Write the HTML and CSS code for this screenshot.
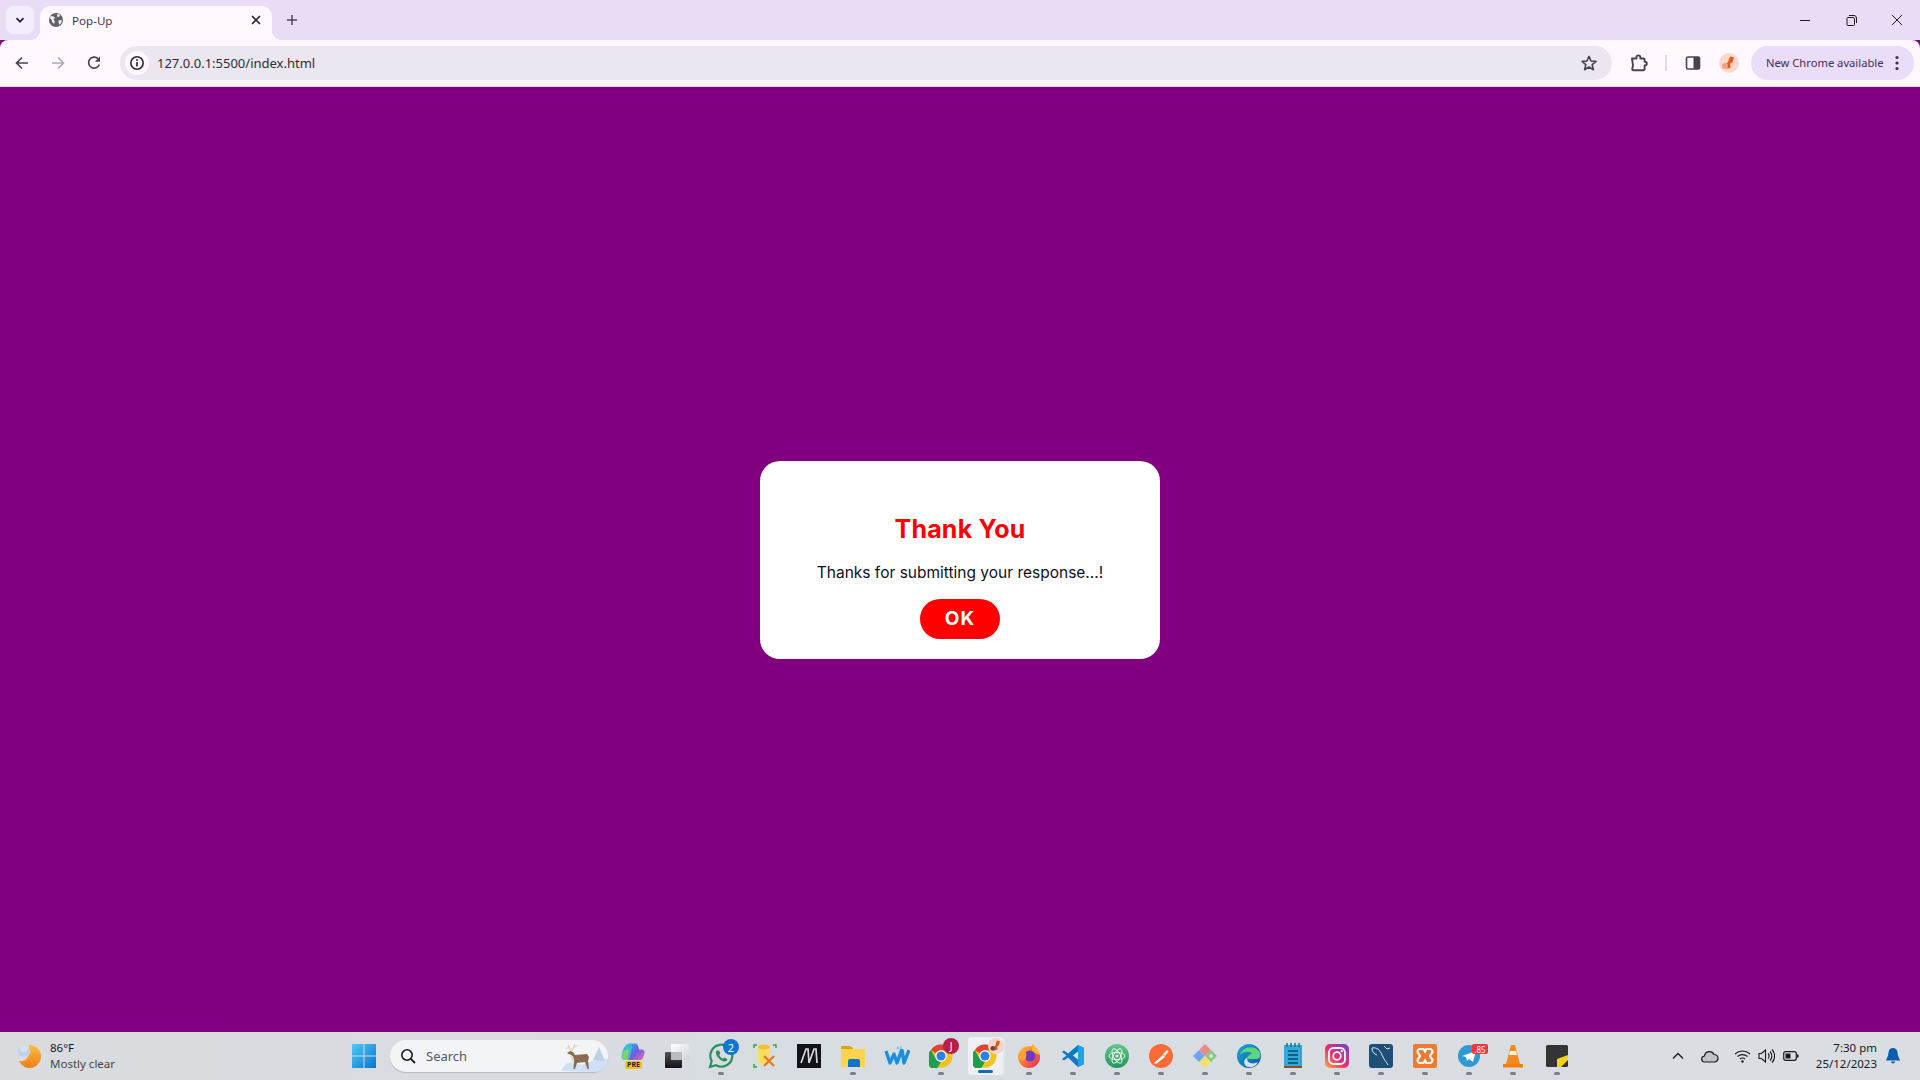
FILE: index.html
```html
<!DOCTYPE html>
<html lang="en">
<head>
<meta charset="utf-8">
<title>Pop-Up</title>
<link rel="stylesheet" href="styles.css">
</head>
<body>
<div class="tabstrip">
  <div class="tab-menu"><svg width="12" height="12" viewBox="0 0 12 12"><path d="M2.500 4.200 6 7.700l3.500-3.500" fill="none" stroke="#2b2438" stroke-width="1.800"/></svg></div>
  <div class="tab">
    <svg class="tab-globe" width="16" height="16" viewBox="0 0 16 16"><circle cx="8" cy="8" r="7" fill="#5f6368"/><path d="M2.500 4 5.500 4.500 7 5.800 5.500 7.500 6.800 9.500 6 12 4.200 10 3.800 8 2 6.500zM9.500 1.800 12 3 11 5 9 4.500zM10.500 8.500l3.300-.5-.6 3-1.700 1.800-.8-1.800z" fill="#f6f1f8"/></svg>
    <span class="tab-title">Pop-Up</span>
    <svg class="tab-close" width="10" height="10" viewBox="0 0 10 10"><path d="M1 1l8 8M9 1 1 9" stroke="#2d2a33" stroke-width="1.700"/></svg>
  </div>
  <svg class="new-tab" width="12" height="12" viewBox="0 0 12 12"><path d="M6 1v10M1 6h10" stroke="#4d4858" stroke-width="1.500"/></svg>
  <div class="win-controls">
    <svg width="46" height="12" viewBox="0 0 46 12"><path d="M18 6.500h10" stroke="#1c1c1c" stroke-width="1"/></svg>
    <svg width="46" height="12" viewBox="0 0 46 12"><path d="M19.500 3.500h5.500a1.500 1.500 0 0 1 1.500 1.500v5.500a1 1 0 0 1-1 1h-5.500a1 1 0 0 1-1-1v-6a1 1 0 0 1 .5-1zM21 1.500h5a2.500 2.500 0 0 1 2.500 2.500v5" fill="none" stroke="#1c1c1c" stroke-width="1"/></svg>
    <svg width="46" height="12" viewBox="0 0 46 12"><path d="M18 1l10 10M28 1 18 11" stroke="#1c1c1c" stroke-width="1"/></svg>
  </div>
</div>

<div class="toolbar">
  <div class="nav-btn"><svg width="16" height="16" viewBox="0 0 16 16"><path d="M14 8H3M8 2.500 2.500 8 8 13.500" fill="none" stroke="#47434f" stroke-width="1.700"/></svg></div>
  <div class="nav-btn"><svg width="16" height="16" viewBox="0 0 16 16"><path d="M2 8h11M8 2.500 13.500 8 8 13.500" fill="none" stroke="#aeaab4" stroke-width="1.700"/></svg></div>
  <div class="nav-btn"><svg width="16" height="16" viewBox="0 0 16 16"><path d="M13.300 9.500A5.500 5.500 0 1 1 12 3.700" fill="none" stroke="#47434f" stroke-width="1.700"/><path d="M14 1.500v5.200H8.800z" fill="#47434f"/></svg></div>
  <div class="omnibox">
    <div class="info-chip"><svg width="16" height="16" viewBox="0 0 16 16"><circle cx="8" cy="8" r="6.200" fill="none" stroke="#2b2833" stroke-width="1.600"/><path d="M8 7v4.500" stroke="#2b2833" stroke-width="1.700"/><circle cx="8" cy="4.900" r="1" fill="#2b2833"/></svg></div>
    <span class="url">127.0.0.1:5500/index.html</span>
    <svg class="star" width="18" height="18" viewBox="0 0 18 18"><path d="M9 2.300l2 4.700 5 .4-3.800 3.300 1.200 5L9 13l-4.400 2.700 1.200-5L2 7.400 7 7z" fill="none" stroke="#47434f" stroke-width="1.600" stroke-linejoin="round"/></svg>
  </div>
  <svg class="ext-icon" width="18" height="18" viewBox="0 0 18 18"><path d="M2 4.500H6.500V3.300a1.900 1.900 0 0 1 3.800 0V4.500h3.300a1 1 0 0 1 1 1v2.200h.3a1.900 1.900 0 0 1 0 3.800h-.3v3.700a1 1 0 0 1-1 1H3.200a1 1 0 0 1-1-1l.8-3.800z" fill="none" stroke="#47434f" stroke-width="1.900" stroke-linejoin="round"/></svg>
  <div class="tool-sep"></div>
  <svg class="panel-icon" width="16" height="16" viewBox="0 0 16 16"><rect x="1.500" y="2" width="13" height="12" rx="1.500" fill="none" stroke="#47434f" stroke-width="1.600"/><rect x="8.500" y="2" width="6" height="12" fill="#47434f"/></svg>
  <svg class="avatar" width="20" height="20" viewBox="0 0 20 20"><circle cx="10" cy="10" r="10" fill="#fbd9cf"/><path d="M11 3.500l4 1-1.500 5-2.500 1 .5 4.500-4 .5-2-3 3.500-3.500z" fill="#e25d1c"/><circle cx="6" cy="13" r="3" fill="#efa184"/></svg>
  <div class="update-pill">
    <span class="pill-text">New Chrome available</span>
    <svg width="4" height="16" viewBox="0 0 4 16"><circle cx="2" cy="2.500" r="1.600" fill="#3a2e55"/><circle cx="2" cy="8" r="1.600" fill="#3a2e55"/><circle cx="2" cy="13.500" r="1.600" fill="#3a2e55"/></svg>
  </div>
</div>

<main class="page">
  <section class="popup">
    <h2 class="popup-title">Thank You</h2>
    <p class="popup-text">Thanks for submitting your response...!</p>
    <button class="popup-btn">OK</button>
  </section>
</main>

<footer class="taskbar">
  <div class="weather">
    <svg width="26" height="26" viewBox="0 0 26 26"><defs><linearGradient id="moon" x1="0" y1="0" x2="0" y2="1"><stop offset="0" stop-color="#f9c13a"/><stop offset="1" stop-color="#ee7d1d"/></linearGradient></defs><path d="M13 2a11.500 11.500 0 1 1-10 16c5 1.500 12-2 10-16z" fill="url(#moon)"/><ellipse cx="8" cy="9" rx="6.500" ry="4.500" fill="#bcd3ea"/><ellipse cx="8" cy="6" rx="3.500" ry="3" fill="#d5e2ef"/></svg>
    <div class="weather-text"><span class="w1">86°F</span><span class="w2">Mostly clear</span></div>
  </div>
  <div class="apps">
    <div class="app start"><svg width="24" height="24" viewBox="0 0 24 24"><defs><linearGradient id="win" x1="0" y1="0" x2="1" y2="1"><stop offset="0" stop-color="#4fcbf7"/><stop offset="1" stop-color="#0a74cf"/></linearGradient></defs><path d="M0 0h11.500v11.500H0zM12.500 0H24v11.500H12.500zM0 12.500h11.500V24H0zM12.500 12.500H24V24H12.500z" fill="url(#win)"/></svg></div>
    <div class="search">
      <svg width="16" height="16" viewBox="0 0 16 16"><circle cx="7" cy="7" r="5.200" fill="none" stroke="#1b1b1b" stroke-width="1.600"/><path d="M10.800 10.800 15 15" stroke="#1b1b1b" stroke-width="1.800"/></svg>
      <span>Search</span>
      <svg class="deer" width="46" height="32" viewBox="0 0 46 32"><path d="M0 31c3-7 8-10 12-8s10 2 14 0 14-5 20-4v6c-3 4-8 7-14 7z" fill="#cfdff4"/><path d="M32 20l6-13 6 14z" fill="#bcd0e8"/><path d="M6 13l3-2 3 1 2 3 12-1 2 3-1 4 1 8h-1.500l-2.500-7-8 1-2 6h-1.500l.500-9-2.500-5-3-1z" fill="#8a6c4e"/><path d="M9 16l3 7 1.500-2-1.500-5z" fill="#e6dccb"/><path d="M10 11 7 5M11 11l3-7M8 8l-3 0M13 7l3-1" stroke="#d9cfc0" stroke-width="1.200" fill="none"/></svg>
    </div>
    <div class="app"><svg class="copilot" width="24" height="17" viewBox="0 0 24 17"><defs><linearGradient id="cop" x1="0" y1="0" x2="1" y2="1"><stop offset="0" stop-color="#2fb4ea"/><stop offset=".5" stop-color="#6a5fe0"/><stop offset="1" stop-color="#ef6fa5"/></linearGradient></defs><path d="M8 .500h6c2 0 3 1.500 3.500 4l.500 2h3c2 0 3 2 2.500 4L22 15c-.5 1.500-1.500 2-3 2H7z" fill="url(#cop)"/><path d="M8 .500C5 1 3 4 1.500 8.500-.5 14 1 17 4 17h4l3-12C11.500 2 10 .500 8 .500z" fill="#3abfd6"/><path d="M1 12c1-4 4-6 7-5l-2 10H4c-2 0-3-2-3-5z" fill="#7ed36b"/></svg><span class="pre-tag">PRE</span></div>
    <div class="app"><svg width="26" height="26" viewBox="0 0 26 26"><defs><linearGradient id="tvw" x1="0" y1="0" x2="1" y2="1"><stop offset="0" stop-color="#fff"/><stop offset="1" stop-color="#cfd2d6"/></linearGradient><linearGradient id="tvd" x1="0" y1="0" x2="0" y2="1"><stop offset="0" stop-color="#555"/><stop offset="1" stop-color="#111"/></linearGradient></defs><rect x="1" y="9" width="17" height="16" rx="1" fill="url(#tvd)"/><rect x="7" y="1" width="18" height="16" rx="1" fill="url(#tvw)"/><rect x="7" y="9" width="11" height="8" fill="#b9bcbf"/></svg></div>
    <div class="app"><svg width="26" height="26" viewBox="0 0 26 26"><path d="M2 24l1.700-6A11 11 0 1 1 8 22.300z" fill="none" stroke="#23935c" stroke-width="2.200"/><path d="M9 7.500c-1.500 1-1.500 3 0 5.500s5 5.500 7.500 5.500c2 0 3-1.500 2.800-2.500l-3-1.500-1.300 1.300c-2-1-3-2-3.800-4l1.200-1.200L11 7.500z" fill="#23935c"/></svg><span class="dot"></span><span class="badge badge-blue">2</span></div>
    <div class="app"><svg width="24" height="26" viewBox="0 0 24 26"><path d="M1 5V2h3M20 2h3v3M1 21v3h3" fill="none" stroke="#37a447" stroke-width="1.500"/><rect x="5" y="2" width="12" height="19" rx="4" fill="#f7dd63"/><ellipse cx="11" cy="4" rx="6" ry="2.500" fill="#f2c22c"/><path d="M11 13l10 10M21 13 11 23" stroke="#e5792a" stroke-width="2.400"/></svg></div>
    <div class="app"><svg width="24" height="24" viewBox="0 0 24 24"><rect width="24" height="24" fill="#12121a"/><path d="M4 19 9 5h2l1 14M12 19 17 5h2l1 14" fill="none" stroke="#d8d8d8" stroke-width="1.700"/></svg></div>
    <div class="app"><svg width="26" height="24" viewBox="0 0 26 24"><path d="M1 3a1 1 0 0 1 1-1h8l3 2v4H1z" fill="#d8a21b"/><path d="M1 5h24v18H1z" fill="#fcd44f"/><path d="M10 15h8a2 2 0 0 1 2 2v6H8v-6a2 2 0 0 1 2-2z" fill="#1274c4"/></svg><span class="dot"></span></div>
    <div class="app"><svg width="26" height="22" viewBox="0 0 26 22"><path d="M2 6l4 12 4-9 3 9 5-14M18 5l2 13 5-13" fill="none" stroke="#1c8fe0" stroke-width="3.400" stroke-linejoin="round"/><circle cx="14" cy="3" r="1.500" fill="#6fd0f4"/><circle cx="17" cy="2" r="1" fill="#6fd0f4"/></svg></div>
    <div class="app"><svg width="24" height="24" viewBox="0 0 26 26"><use href="#chrome-logo"/></svg><span class="dot"></span><span class="badge badge-j">J</span></div>
    <div class="app active"><svg width="24" height="24" viewBox="0 0 26 26"><use href="#chrome-logo"/></svg><span class="active-line"></span><svg class="avatar-badge" width="16" height="16" viewBox="0 0 20 20"><circle cx="10" cy="10" r="10" fill="#f6d5c9"/><path d="M11 3l4 1.500-1.500 5-2 1 .5 4-4 1-2-3 3.500-3.500z" fill="#df5a1a"/><circle cx="6" cy="13" r="3" fill="#6b4a3a"/></svg></div>
    <div class="app"><svg width="24" height="24" viewBox="0 0 24 24"><defs><linearGradient id="ff" x1="0" y1="0" x2="1" y2="1"><stop offset="0" stop-color="#ffcf3a"/><stop offset=".5" stop-color="#ff7139"/><stop offset="1" stop-color="#e3245f"/></linearGradient></defs><circle cx="12" cy="13" r="11" fill="url(#ff)"/><path d="M15 0c3 2 7 6 8 11l-8-3z" fill="#ffb52e"/><circle cx="13" cy="12" r="5.500" fill="#6a3bc4"/><path d="M1 12c1-4 5-5 8-3 1 3 0 6-2 8-3 0-5-2-6-5z" fill="#ffa12e"/></svg><span class="dot"></span></div>
    <div class="app"><svg width="24" height="24" viewBox="0 0 24 24"><path d="M17 1l6 3v16l-6 3L7 13.500l-4 3L1 15l4.500-3.500L1 8l2-1.500 4 3z" fill="#0e78c4"/><path d="M17 1l6 3v16l-6 3V15.500l-5-4 5-4z" fill="#21a1ec"/><path d="M17 7.500v8l-5-4z" fill="#dde1e5"/></svg><span class="dot"></span></div>
    <div class="app"><svg width="24" height="24" viewBox="0 0 24 24"><defs><linearGradient id="atom" x1="0" y1="0" x2="0" y2="1"><stop offset="0" stop-color="#67c48a"/><stop offset="1" stop-color="#1f9856"/></linearGradient></defs><circle cx="12" cy="12" r="12" fill="url(#atom)"/><g fill="none" stroke="#e8f6ed" stroke-width="1"><ellipse cx="12" cy="12" rx="8" ry="3.500"/><ellipse cx="12" cy="12" rx="8" ry="3.500" transform="rotate(60 12 12)"/><ellipse cx="12" cy="12" rx="8" ry="3.500" transform="rotate(120 12 12)"/></g><circle cx="12" cy="12" r="1.500" fill="#e8f6ed"/></svg><span class="dot"></span></div>
    <div class="app"><svg width="24" height="24" viewBox="0 0 24 24"><circle cx="12" cy="12" r="12" fill="#fb6b35"/><path d="M5 19l9-8 2 2-9 7zM14 10l4-4 1.500 1.500L16 12z" fill="#fff"/></svg><span class="dot"></span></div>
    <div class="app"><svg width="24" height="24" viewBox="0 0 24 24"><path d="M6 6l6 6-6 6-6-6z" fill="#6ea6f7"/><path d="M9.500 2.500 12 0l6 6-6 6-6-6z" fill="#e98a8a"/><path d="M18 6l6 6-6 6-6-6z" fill="#85c97a"/><path d="M12 12l6 6-6 6-6-6z" fill="#f6dd6d"/><circle cx="18" cy="12" r="2" fill="#d8dde2"/></svg><span class="dot"></span></div>
    <div class="app"><svg width="24" height="24" viewBox="0 0 24 24"><defs><linearGradient id="edge" x1="0" y1="0" x2="1" y2="1"><stop offset="0" stop-color="#1ba7d8"/><stop offset="1" stop-color="#0c59a4"/></linearGradient></defs><circle cx="12" cy="12" r="12" fill="url(#edge)"/><path d="M3 11C5 3 17 0 22.500 8c2 4 .5 7-3.500 7H10c0-3 3-5 5-5-2-3-9-3-12 1z" fill="#5fd57e"/><path d="M10 14c0 5 5 7 11 4-3 6-9 6-12 4-3-3-2-7 1-8z" fill="#d7e3ec"/></svg><span class="dot"></span></div>
    <div class="app"><svg width="20" height="26" viewBox="0 0 20 26"><rect x="1" y="2" width="18" height="21" fill="#2fa9d8"/><rect x="1" y="23" width="18" height="2" fill="#8a4f1e"/><path d="M4 0v4M8 0v4M12 0v4M16 0v4" stroke="#1b6f95" stroke-width="1.500"/><path d="M5 8h10M5 12h10M5 16h10M5 20h10" stroke="#0f5f8a" stroke-width="1.800"/></svg><span class="dot"></span></div>
    <div class="app"><svg width="24" height="24" viewBox="0 0 24 24"><defs><linearGradient id="ig" x1="0" y1="1" x2="1" y2="0"><stop offset="0" stop-color="#fcb03b"/><stop offset=".45" stop-color="#e8306e"/><stop offset="1" stop-color="#6a45d0"/></linearGradient></defs><rect width="24" height="24" rx="5" fill="url(#ig)"/><rect x="4" y="4" width="16" height="16" rx="4.500" fill="none" stroke="#fff" stroke-width="1.800"/><circle cx="12" cy="12" r="3.800" fill="none" stroke="#fff" stroke-width="1.800"/><circle cx="16.800" cy="7.200" r="1.100" fill="#fff"/></svg><span class="dot"></span></div>
    <div class="app"><svg width="24" height="24" viewBox="0 0 24 24"><rect width="24" height="24" rx="3" fill="#1e4f78"/><path d="M3 4c5-1 8 2 10 7s4 6 6 10M3 4c0 4 2 6 5 7M15 2l3 3M18 5l3-1" fill="none" stroke="#dfe9f2" stroke-width="1"/></svg><span class="dot"></span></div>
    <div class="app"><svg width="24" height="24" viewBox="0 0 24 24"><rect width="24" height="24" rx="2" fill="#f07a2c"/><path d="M7 5h3.500L12 7.500 13.500 5H17a2.500 2.500 0 0 1 2 4l-2 3 2 3a2.500 2.500 0 0 1-2 4h-3.500L12 16.500 10.500 19H7a2.500 2.500 0 0 1-2-4l2-3-2-3a2.500 2.500 0 0 1 2-4z" fill="none" stroke="#fff" stroke-width="2.200"/></svg><span class="dot"></span></div>
    <div class="app"><svg width="22" height="22" viewBox="0 0 22 22"><circle cx="11" cy="11" r="11" fill="#2b9ad7"/><path d="M4 11l14-5-3 11-4-3-2 2-1-4z" fill="#fff"/></svg><span class="dot"></span><span class="badge badge-red">.85</span></div>
    <div class="app"><svg width="20" height="24" viewBox="0 0 20 24"><path d="M8 1h4l5 19H3z" fill="#f58a1c"/><path d="M7 7h6l1 4H6z" fill="#f4f0ea"/><path d="M0 20h20v3.500H0z" fill="#ef8212"/></svg><span class="dot"></span></div>
    <div class="app"><svg width="22" height="22" viewBox="0 0 22 22"><rect width="22" height="22" rx="1.500" fill="#343434"/><path d="M11 14 22 10v5l-7 7h-4z" fill="#f7d216"/></svg><span class="dot"></span></div>
  </div>
  <div class="tray">
    <svg class="t-chev" width="12" height="8" viewBox="0 0 12 8"><path d="M1 6.500l5-5 5 5" fill="none" stroke="#1a1a1a" stroke-width="1.300"/></svg>
    <svg class="t-cloud" width="18" height="14" viewBox="0 0 18 14"><path d="M4 13a3 3 0 0 1-.5-6A5 5 0 0 1 13 5.500 3.800 3.800 0 0 1 14 13z" fill="#bfc3c7" stroke="#1a1a1a" stroke-width="1.200"/></svg>
    <svg class="t-wifi" width="17" height="14" viewBox="0 0 17 14"><path d="M1 5a11 11 0 0 1 15 0M3.500 7.500a7.500 7.500 0 0 1 10 0M6 10a3.500 3.500 0 0 1 5 0" fill="none" stroke="#1a1a1a" stroke-width="1.100"/><circle cx="8.500" cy="12.500" r="1.200" fill="#1a1a1a"/></svg>
    <svg class="t-vol" width="17" height="16" viewBox="0 0 17 16"><path d="M1 5.500h2.500L7.500 2v12l-4-3.500H1z" fill="none" stroke="#1a1a1a" stroke-width="1.100"/><path d="M10 5.500a3.500 3.500 0 0 1 0 5M12 3.500a6.500 6.500 0 0 1 0 9M14 1.500a9.500 9.500 0 0 1 0 13" fill="none" stroke="#1a1a1a" stroke-width="1.100"/></svg>
    <svg class="t-bat" width="16" height="10" viewBox="0 0 16 10"><rect x=".7" y=".7" width="12.600" height="8.600" rx="2" fill="none" stroke="#1a1a1a" stroke-width="1.200"/><rect x="2.500" y="2.500" width="5" height="5" fill="#1a1a1a"/><rect x="14" y="3.500" width="1.500" height="3" fill="#1a1a1a"/></svg>
    <div class="clock"><span>7:30 pm</span><span>25/12/2023</span></div>
    <svg class="t-bell" width="14" height="16" viewBox="0 0 14 16"><path d="M7 0a4.500 4.500 0 0 1 4.500 4.500c0 4 2.500 6.500 2.500 8H0c0-1.500 2.500-4 2.500-8A4.500 4.500 0 0 1 7 0zM5 13.500h4a2 2 0 0 1-4 0z" fill="#0b5cad"/></svg>
  </div>
  <svg class="defs" width="0" height="0"><defs><symbol id="chrome-logo" viewBox="0 0 26 26"><circle cx="13" cy="13" r="12.500" fill="#f4c21f"/><path d="M13 .500A12.500 12.500 0 0 1 23.800 6.700H13a6.300 6.300 0 0 0-5.500 3.200L2.100 6.800A12.500 12.500 0 0 1 13 .500z" fill="#dc4437"/><path d="M2.100 6.800l5.400 9.400a6.300 6.300 0 0 0 5.500 3.100l-5.400 9.300-.4-.3A12.500 12.500 0 0 1 2.100 6.800z" fill="#1e9e4e"/><circle cx="13" cy="13" r="6.200" fill="#fff"/><circle cx="13" cy="13" r="4.900" fill="#2c7fec"/></symbol></defs></svg>
</footer>
</body>
</html>
```
FILE: styles.css
```css
* { box-sizing: border-box; }
html, body { margin: 0; height: 100%; }
body {
  display: flex;
  flex-direction: column;
  height: 1080px;
  overflow: hidden;
  font-family: "Noto Sans", "Open Sans", sans-serif;
  background: #800080;
}
svg { display: block; flex: none; }

/* Tab strip */
.tabstrip {
  flex: none;
  height: 40px;
  background: #e9ddf6;
  display: flex;
  align-items: flex-start;
  padding: 6px 0 0 6px;
}
.tab-menu {
  width: 28px;
  height: 28px;
  border-radius: 8px;
  background: #f4edfb;
  display: flex;
  align-items: center;
  justify-content: center;
}
.tab {
  position: relative;
  width: 232px;
  height: 34px;
  margin-left: 6px;
  background: #fff8ff;
  border-radius: 10px 10px 0 0;
  display: flex;
  align-items: center;
  padding: 0 11px 6px 8px;
}
.tab::before, .tab::after {
  content: "";
  position: absolute;
  bottom: 0;
  width: 10px;
  height: 10px;
}
.tab::before { left: -10px; background: radial-gradient(circle at 0 0, transparent 10px, #fff8ff 10.500px); }
.tab::after { right: -10px; background: radial-gradient(circle at 100% 0, transparent 10px, #fff8ff 10.500px); }
.tab-title { margin-left: 8px; font-size: 11.600px; color: #3f3d46; flex: 1; }
.new-tab { margin: 8px 0 0 14px; }
.win-controls { margin-left: auto; padding-top: 8px; display: flex; }

/* Toolbar */
.toolbar {
  flex: none;
  height: 47px;
  background: #fff8ff;
  border-bottom: 1px solid #ddd6e2;
  border-radius: 8px 8px 0 0;
  display: flex;
  align-items: flex-start;
  padding: 6px 6px 0 4px;
}
.nav-btn { width: 36px; height: 34px; display: flex; align-items: center; justify-content: center; }
.omnibox {
  flex: 1;
  height: 34px;
  margin-left: 8px;
  background: #ebe6ef;
  border-radius: 17px;
  display: flex;
  align-items: center;
  padding: 0 14px 0 5px;
}
.info-chip {
  width: 24px;
  height: 24px;
  border-radius: 50%;
  background: #fff8ff;
  display: flex;
  align-items: center;
  justify-content: center;
}
.url { margin-left: 8px; font-size: 13px; color: #2f2c38; flex: 1; }
.ext-icon { margin: 8px 0 0 18px; }
.tool-sep { width: 2px; height: 16px; margin: 9px 0 0 17px; background: #e3daf0; }
.panel-icon { margin: 9px 0 0 18px; }
.avatar { margin: 7px 0 0 18px; }
.update-pill {
  width: 163px;
  height: 34px;
  margin-left: 12px;
  border-radius: 17px;
  background: #e9ddf9;
  display: flex;
  align-items: center;
  padding: 0 15px 0 15px;
  justify-content: space-between;
  font-size: 11.200px;
  color: #3f2f5c;
}
.pill-text { padding-bottom: 1px; }

/* Page */
.page {
  flex: 1;
  min-height: 0;
  background: #800080;
  display: flex;
  align-items: center;
  justify-content: center;
}
.popup {
  width: 400px;
  height: 198px;
  background: #fff;
  border-radius: 20px;
  display: flex;
  flex-direction: column;
  align-items: center;
  padding-top: 52px;
  font-family: Inter, "Noto Sans", sans-serif;
}
.popup-title { margin: 0; font-size: 25px; line-height: 32px; font-weight: 700; color: #f00; letter-spacing: .2px; }
.popup-text { margin: 16px 0 0; font-size: 15.500px; line-height: 24px; color: #101018; }
.popup-btn {
  width: 80px;
  height: 40px;
  margin-top: 14px;
  border: 0;
  border-radius: 20px;
  background: #f00;
  color: #fff;
  font: 700 19px Inter, sans-serif;
  letter-spacing: 1px;
}

/* Taskbar */
.taskbar {
  flex: none;
  height: 48px;
  background: linear-gradient(90deg, #d9dbde, #d8dde2 50%, #dadde2);
  display: flex;
  align-items: center;
  font-size: 12px;
  color: #1a1a1a;
}
.weather { width: 342px; padding-left: 16px; display: flex; align-items: center; gap: 8px; }
.weather-text { display: flex; flex-direction: column; line-height: 16px; font-size: 11.500px; }
.w2 { color: #44464a; }
.apps { display: flex; align-items: center; height: 48px; }
.app {
  position: relative;
  width: 44px;
  height: 48px;
  display: flex;
  align-items: center;
  justify-content: center;
}
.search {
  width: 218px;
  height: 32px;
  margin: 0 3px 0 4px;
  border-radius: 16px;
  background: #f3f4f6;
  box-shadow: 0 1px 1px #b4b8bd;
  display: flex;
  align-items: center;
  padding-left: 10px;
  gap: 10px;
  font-size: 13px;
  color: #55585c;
}
.search span { flex: 1; }
.deer { margin-right: 1px; }
.copilot { margin-bottom: 10px; }
.pre-tag {
  position: absolute;
  left: 14px;
  bottom: 11px;
  width: 17px;
  height: 8px;
  line-height: 8px;
  text-align: center;
  font-size: 7px;
  font-weight: 700;
  background: #f6c21b;
  color: #222;
  border-radius: 2px;
}
.dot {
  position: absolute;
  left: 19px;
  bottom: 5px;
  width: 6px;
  height: 3px;
  border-radius: 2px;
  background: #7c7f84;
}
.active { background: #eef0f3; width: 35px; height: 38px; margin: 0 4.500px; border-radius: 4px; box-shadow: 3px 0 0 -1px #e2e5e9; }
.active-line {
  position: absolute;
  left: 10px;
  bottom: 2px;
  width: 15px;
  height: 3px;
  border-radius: 2px;
  background: #0f6cbd;
}
.badge {
  position: absolute;
  display: flex;
  align-items: center;
  justify-content: center;
  color: #fff;
}
.badge-blue { left: 24px; top: 7px; width: 16px; height: 16px; border-radius: 50%; background: #0f75d1; font-size: 11px; }
.badge-j { left: 24px; top: 6px; width: 16px; height: 16px; border-radius: 50%; background: #b32046; font-size: 10px; }
.badge-red { left: 25px; top: 12px; width: 16px; height: 10px; border-radius: 2px; background: #f0353b; font-size: 8px; }
.avatar-badge { position: absolute; left: 20px; top: 1px; }
.tray { flex: 1; display: flex; align-items: center; padding-left: 93px; }
.t-cloud { margin-left: 17px; }
.t-wifi { margin-left: 15px; }
.t-vol { margin-left: 7px; }
.t-bat { margin-left: 8px; }
.clock { width: 70px; margin-left: 8px; display: flex; flex-direction: column; align-items: flex-end; line-height: 16px; font-size: 11.500px; }
.t-bell { margin-left: 9px; }
.defs { position: absolute; }
```
